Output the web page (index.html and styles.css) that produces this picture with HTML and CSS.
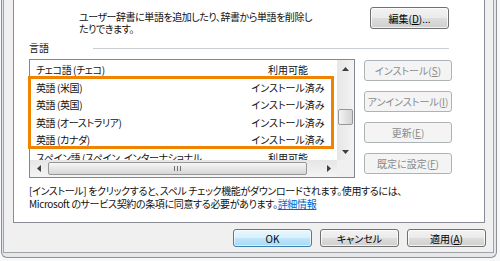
FILE: index.html
```html
<!DOCTYPE html>
<html lang="ja">
<head>
  <meta charset="UTF-8" />
  <title>言語</title>
  <link rel="stylesheet" href="styles.css">
</head>
<body>
  <div class="window">
    <div class="dialog">
      <div class="page">
        <div class="dict">
          <p class="dict-text">ユーザー辞書に単語を追加したり、辞書から単語を削除し<br>たりできます。</p>
          <button class="btn edit">編集(<u>D</u>)...</button>
        </div>

        <div class="group-head">
          <span class="group-label">言語</span>
          <span class="group-line"></span>
        </div>

        <div class="lang-area">
          <div class="listbox">
            <div class="list-items">
              <div class="item"><span class="name">チェコ語 (チェコ)</span><span class="status">利用可能</span></div>
              <div class="item"><span class="name">英語 (米国)</span><span class="status">インストール済み</span></div>
              <div class="item"><span class="name">英語 (英国)</span><span class="status">インストール済み</span></div>
              <div class="item"><span class="name">英語 (オーストラリア)</span><span class="status">インストール済み</span></div>
              <div class="item"><span class="name">英語 (カナダ)</span><span class="status">インストール済み</span></div>
              <div class="item"><span class="name">スペイン語 (スペイン, インターナショナル ...</span><span class="status">利用可能</span></div>
            </div>
            <div class="vscroll">
              <div class="arrow"><svg width="7" height="4" viewBox="0 0 7 4"><path d="M0 4 L3.5 0 L7 4Z" /></svg></div>
              <div class="vtrack"><div class="vthumb"></div></div>
              <div class="arrow"><svg width="7" height="4" viewBox="0 0 7 4"><path d="M0 0 L3.5 4 L7 0Z" /></svg></div>
            </div>
            <div class="hscroll">
              <div class="arrow"><svg width="4" height="7" viewBox="0 0 4 7"><path d="M4 0 L0 3.5 L4 7Z" /></svg></div>
              <div class="hthumb"><span class="grip"></span><span class="grip"></span><span class="grip"></span></div>
              <div class="arrow right"><svg width="4" height="7" viewBox="0 0 4 7"><path d="M0 0 L4 3.5 L0 7Z" /></svg></div>
            </div>
            <div class="corner"></div>
            <div class="highlight"></div>
          </div>

          <div class="side-btns">
            <button class="btn side" disabled>インストール(<u>S</u>)</button>
            <button class="btn side" disabled>アンインストール(<u>I</u>)</button>
            <button class="btn side" disabled>更新(<u>E</u>)</button>
            <button class="btn side" disabled>既定に設定(<u>F</u>)</button>
          </div>
        </div>

        <p class="note">[インストール] をクリックすると、スペル チェック機能がダウンロードされます。使用するには、<br>Microsoft のサービス契約の条項に同意する必要があります。<a class="more" href="#">詳細情報</a></p>
      </div>

      <div class="footer">
        <button class="btn foot default">OK</button>
        <button class="btn foot">キャンセル</button>
        <button class="btn foot">適用(<u>A</u>)</button>
      </div>
    </div>
  </div>
</body>
</html>
```

FILE: styles.css
```css
* {
  box-sizing: border-box;
}
body {
  margin: 0;
  background: #f7f8f9;
  font-family: "Noto Sans CJK JP", "Noto Sans", sans-serif;
  font-size: 10px;
  font-feature-settings: "palt";
  color: #111;
}
.window {
  display: flex;
  margin-left: 1px;
  width: 496px;
  height: 258px;
  padding: 0 2px 4px 1px;
  background: #e4e7eb;
  border: 1px solid #8d9094;
  border-top: 0;
  border-radius: 0 0 6px 6px;
}
.dialog {
  flex: 1;
  min-width: 0;
  display: flex;
  flex-direction: column;
  padding: 0 8px 0 9px;
  background: #f0f0f0;
  border: 1px solid #a3a3a3;
  border-top: 0;
}
.page {
  flex: none;
  height: 223px;
  padding: 0 32px 0 15px;
  overflow: hidden;
  background: #fff;
  border: 1px solid #898c95;
  border-top: 0;
}

/* buttons */
.btn {
  padding: 0;
  font: inherit;
  color: #000;
  border: 1px solid #707070;
  border-radius: 3px;
  background: linear-gradient(#f2f2f2 0%, #ebebeb 48%, #dddddd 52%, #cfcfcf 100%);
  box-shadow: inset 0 0 0 1px rgba(255,255,255,0.75);
  white-space: nowrap;
}
.btn:disabled {
  color: #8a8a8a;
  border-color: #adb2b5;
  background: #f4f4f4;
  box-shadow: none;
}
.btn.default {
  border-color: #3c7fb1;
  background: linear-gradient(#eaf6fd 0%, #d9f0fc 48%, #bee6fd 52%, #a7d9f5 100%);
  box-shadow: inset 0 0 0 1px rgba(255,255,255,0.6);
}

/* user dictionary */
.dict {
  display: flex;
  align-items: flex-start;
  padding-top: 7px;
}
.dict-text {
  margin: 4px 0 0 50px;
  line-height: 12px;
  letter-spacing: -0.45px;
}
.edit {
  margin: 0 3px 0 auto;
  width: 79px;
  height: 22px;
}

.group-head {
  display: flex;
  align-items: center;
  margin-top: 7px;
  height: 12px;
  line-height: 12px;
}
.group-label {
  width: 64px;
}
.group-line {
  flex: 1;
  margin: 1px 3px 0 0;
  border-top: 1px solid #c9ced3;
}

/* language list */
.lang-area {
  display: flex;
  margin-top: 5px;
}
.listbox {
  position: relative;
  display: grid;
  grid-template-columns: 1fr 17px;
  grid-template-rows: 1fr 17px;
  width: 326px;
  height: 119px;
  background: #fff;
  border: 1px solid #828790;
}
.list-items {
  overflow: hidden;
  padding-top: 1px;
}
.item {
  display: grid;
  grid-template-columns: 1fr 80px;
  height: 17.5px;
  line-height: 17.5px;
  padding: 0 9px 0 6px;
  white-space: nowrap;
}
.name {
  overflow: hidden;
  letter-spacing: -0.4px;
}
.status {
  text-align: center;
}

.vscroll {
  display: flex;
  flex-direction: column;
  background: linear-gradient(to right, #e6e6e6, #f4f4f4);
}
.vscroll .arrow,
.hscroll .arrow {
  display: flex;
  align-items: center;
  justify-content: center;
  flex: none;
  width: 17px;
  height: 17px;
}
.arrow path {
  fill: #3e3e3e;
}
.vtrack {
  flex: 1;
  padding: 32px 0 0 1px;
}
.vthumb {
  width: 15px;
  height: 16px;
  border: 1px solid #979797;
  border-radius: 2px;
  background: linear-gradient(to right, #f4f4f4, #e3e3e3 50%, #d4d4d4);
}
.hscroll {
  display: flex;
  align-items: flex-start;
  background: linear-gradient(#e6e6e6, #f4f4f4);
}
.hscroll .arrow.right {
  margin-left: auto;
}
.hthumb {
  display: flex;
  align-items: center;
  justify-content: center;
  gap: 2px;
  width: 259px;
  height: 13px;
  margin: 2px 0 0 1px;
  border: 1px solid #979797;
  border-radius: 2px;
  background: linear-gradient(#f6f6f6, #e6e6e6 50%, #d6d6d6);
}
.grip {
  width: 1px;
  height: 5px;
  background: #6f6f6f;
}
.corner {
  background: #f0f0f0;
}
.highlight {
  position: absolute;
  left: -2px;
  top: 16px;
  width: 306px;
  height: 73px;
  border: 3px solid #f08300;
}

.side-btns {
  display: flex;
  flex-direction: column;
  gap: 10px;
  margin-left: 9px;
  padding-top: 1px;
}
.side {
  width: 88px;
  height: 21px;
}

.note {
  margin: 6px 0 0;
  line-height: 13px;
  letter-spacing: -0.35px;
  white-space: nowrap;
}
.more {
  color: #0066cc;
}

/* dialog buttons */
.footer {
  display: flex;
  justify-content: flex-end;
  gap: 8px;
  margin-right: -1px;
  padding-top: 6px;
}
.foot {
  width: 79px;
  height: 18px;
}
```
